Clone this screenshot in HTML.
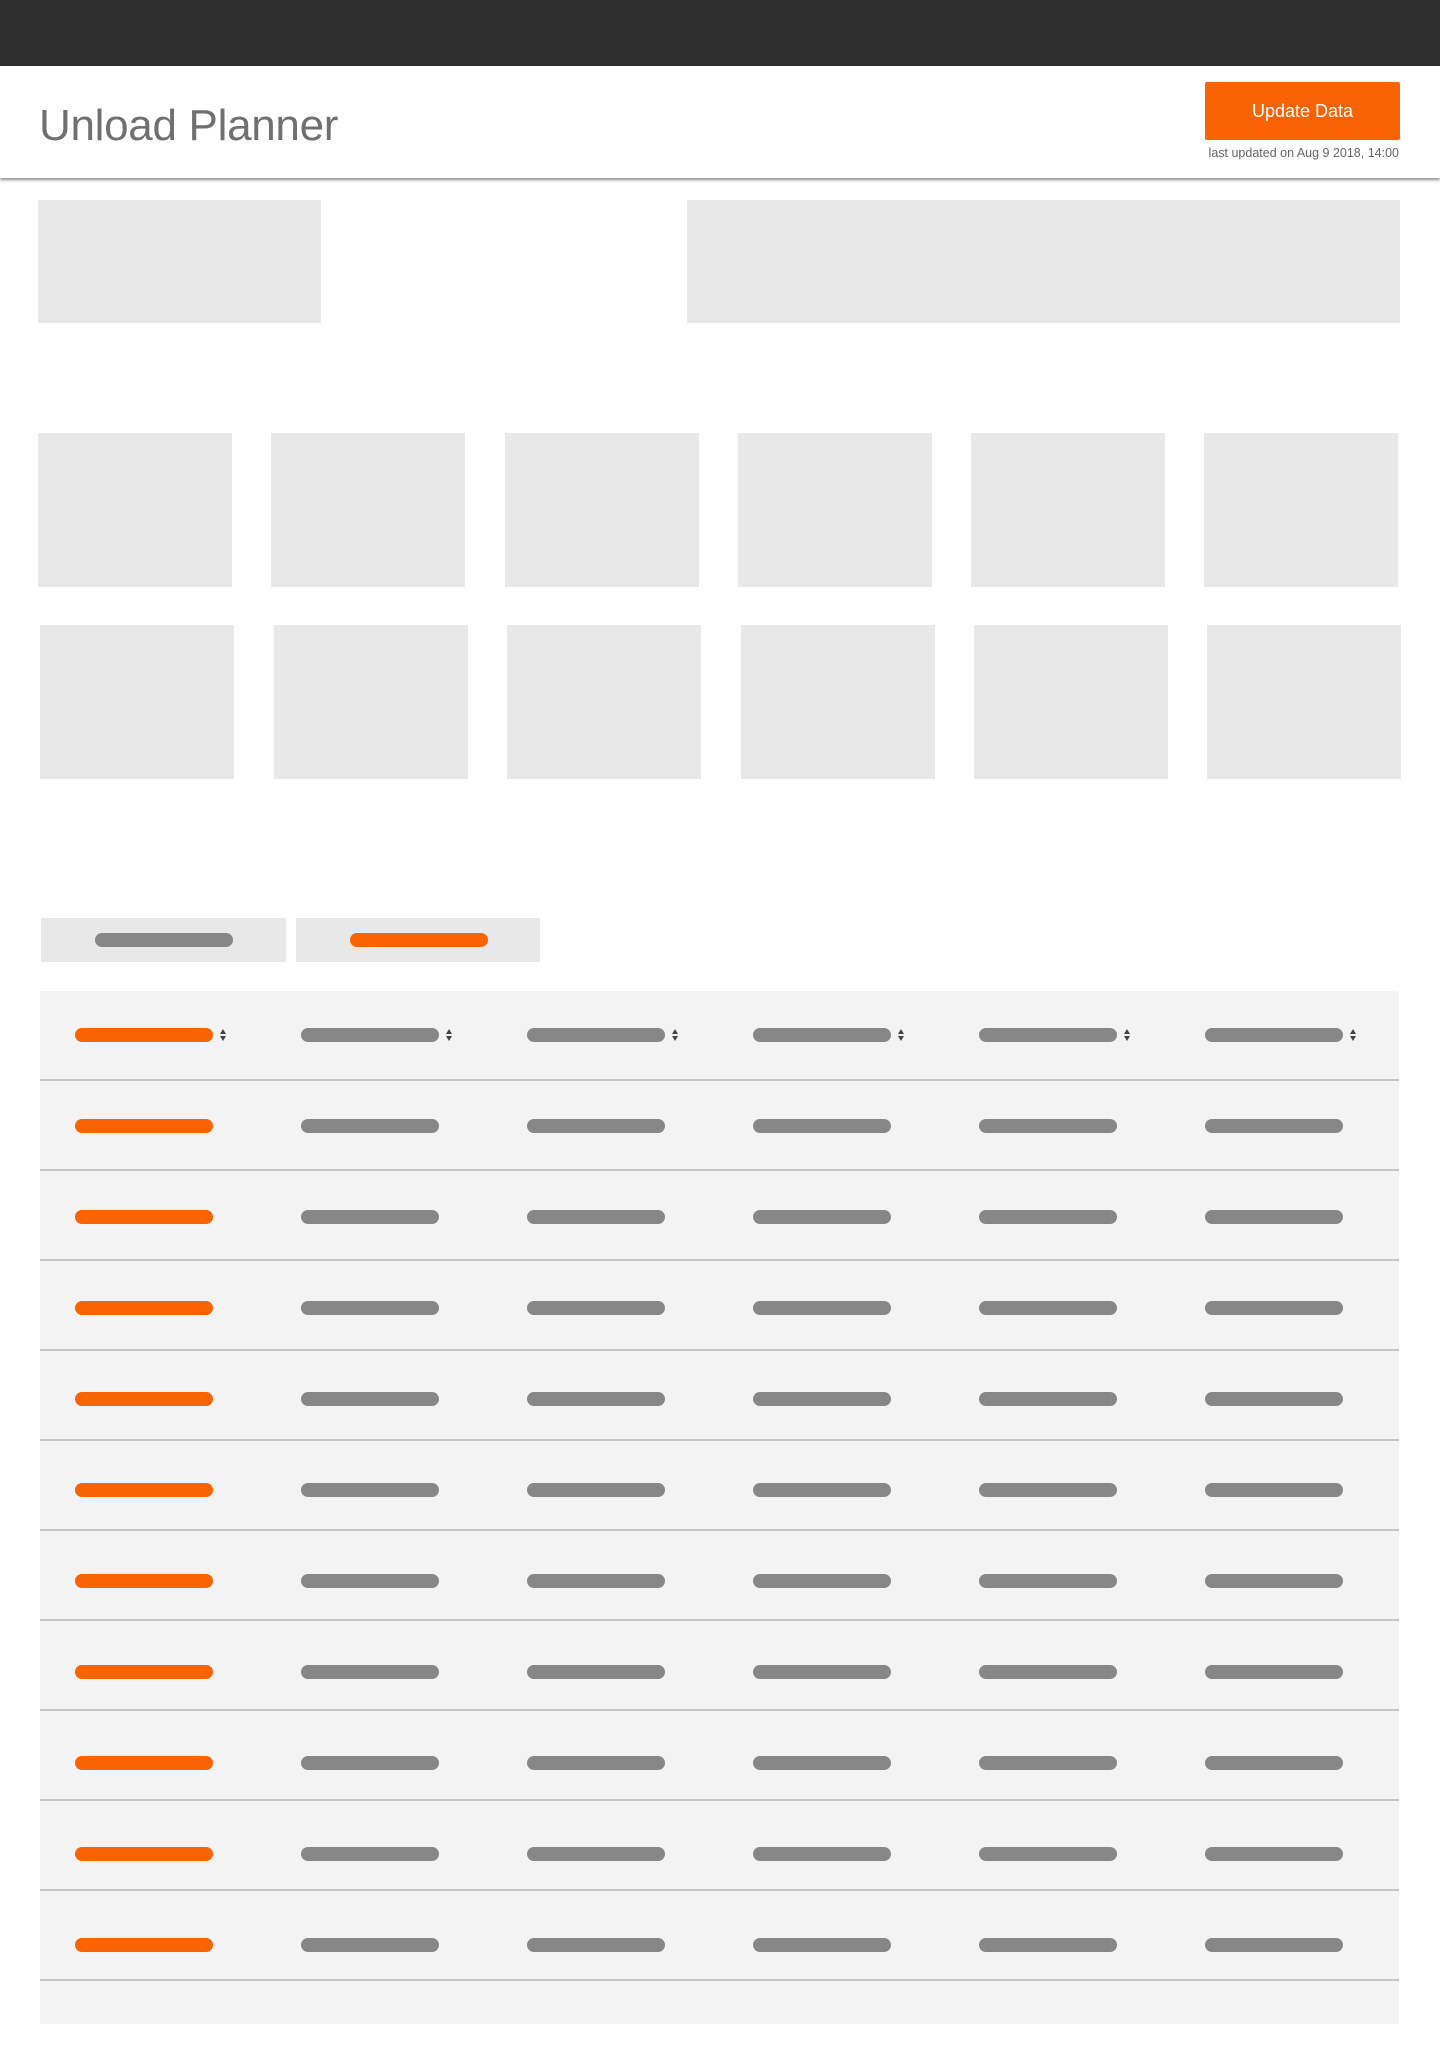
<!DOCTYPE html>
<html><head><meta charset="utf-8">
<style>
*{margin:0;padding:0;box-sizing:border-box}
body{width:1440px;height:2064px;background:#fff;position:relative;font-family:"Liberation Sans",sans-serif;overflow:hidden}
.a{position:absolute}
.top{left:0;top:0;width:1440px;height:66px;background:#2f2f2f}
.hdr{left:0;top:66px;width:1440px;height:112px;background:#fff;box-shadow:0 2px 3px rgba(0,0,0,.45)}
.title{left:39px;top:96px;font-size:44px;font-weight:300;color:#707070;letter-spacing:-0.3px;line-height:60px}
.btn{left:1205px;top:82px;width:195px;height:58px;background:#f96302;border-radius:2px;color:#fff;font-size:18px;text-align:center;line-height:58px}
.sub{left:1100px;width:299px;top:146px;text-align:right;font-size:12.5px;color:#666}
.g{background:#e8e8e8}
.tbl{left:40px;top:991px;width:1359px;height:1033px;background:#f3f3f3;border-radius:2px}
.row{position:absolute;left:0;width:1359px;height:90px;border-bottom:2px solid #c4c4c4}
.p{position:absolute;top:37px;width:138px;height:14px;border-radius:7px;background:#878787}
.o{background:#f96302}
.ar{position:absolute;top:36px;width:8px;height:16px}
.r1 .p{top:38px}.r2 .p{top:39px}.r3 .p{top:40px}.r4 .p{top:41px}.r5 .p{top:42px}
.r6 .p{top:43px}.r7 .p{top:44px}.r8 .p{top:45px}.r9 .p{top:46px}.r10 .p{top:47px}
</style></head><body>
<div class="a top"></div>
<div class="a hdr"></div>
<div class="a title">Unload Planner</div>
<div class="a btn">Update Data</div>
<div class="a sub">last updated on Aug 9 2018, 14:00</div>

<div class="a g" style="left:38px;top:200px;width:283px;height:123px"></div>
<div class="a g" style="left:687px;top:200px;width:713px;height:123px"></div>

<div class="a g" style="left:38px;top:433px;width:194px;height:154px"></div>
<div class="a g" style="left:271px;top:433px;width:194px;height:154px"></div>
<div class="a g" style="left:505px;top:433px;width:194px;height:154px"></div>
<div class="a g" style="left:738px;top:433px;width:194px;height:154px"></div>
<div class="a g" style="left:971px;top:433px;width:194px;height:154px"></div>
<div class="a g" style="left:1204px;top:433px;width:194px;height:154px"></div>

<div class="a g" style="left:40px;top:625px;width:194px;height:154px"></div>
<div class="a g" style="left:274px;top:625px;width:194px;height:154px"></div>
<div class="a g" style="left:507px;top:625px;width:194px;height:154px"></div>
<div class="a g" style="left:741px;top:625px;width:194px;height:154px"></div>
<div class="a g" style="left:974px;top:625px;width:194px;height:154px"></div>
<div class="a g" style="left:1207px;top:625px;width:194px;height:154px"></div>

<div class="a g" style="left:41px;top:918px;width:245px;height:44px"><div class="p" style="left:54px;top:15px"></div></div>
<div class="a g" style="left:296px;top:918px;width:244px;height:44px"><div class="p o" style="left:54px;top:15px"></div></div>

<div class="a tbl">
<div class="row" style="top:0">
<div class="p o" style="left:35px"></div><svg class="ar" style="left:179px" viewBox="0 0 8 16"><path d="M4 2L7 7H1Z M4 14L7 9H1Z" fill="#444"/></svg>
<div class="p" style="left:261px"></div><svg class="ar" style="left:405px" viewBox="0 0 8 16"><path d="M4 2L7 7H1Z M4 14L7 9H1Z" fill="#444"/></svg>
<div class="p" style="left:487px"></div><svg class="ar" style="left:631px" viewBox="0 0 8 16"><path d="M4 2L7 7H1Z M4 14L7 9H1Z" fill="#444"/></svg>
<div class="p" style="left:713px"></div><svg class="ar" style="left:857px" viewBox="0 0 8 16"><path d="M4 2L7 7H1Z M4 14L7 9H1Z" fill="#444"/></svg>
<div class="p" style="left:939px"></div><svg class="ar" style="left:1083px" viewBox="0 0 8 16"><path d="M4 2L7 7H1Z M4 14L7 9H1Z" fill="#444"/></svg>
<div class="p" style="left:1165px"></div><svg class="ar" style="left:1309px" viewBox="0 0 8 16"><path d="M4 2L7 7H1Z M4 14L7 9H1Z" fill="#444"/></svg>
</div>
<div class="row r1" style="top:90px"><div class="p o" style="left:35px"></div><div class="p" style="left:261px"></div><div class="p" style="left:487px"></div><div class="p" style="left:713px"></div><div class="p" style="left:939px"></div><div class="p" style="left:1165px"></div></div>
<div class="row r2" style="top:180px"><div class="p o" style="left:35px"></div><div class="p" style="left:261px"></div><div class="p" style="left:487px"></div><div class="p" style="left:713px"></div><div class="p" style="left:939px"></div><div class="p" style="left:1165px"></div></div>
<div class="row r3" style="top:270px"><div class="p o" style="left:35px"></div><div class="p" style="left:261px"></div><div class="p" style="left:487px"></div><div class="p" style="left:713px"></div><div class="p" style="left:939px"></div><div class="p" style="left:1165px"></div></div>
<div class="row r4" style="top:360px"><div class="p o" style="left:35px"></div><div class="p" style="left:261px"></div><div class="p" style="left:487px"></div><div class="p" style="left:713px"></div><div class="p" style="left:939px"></div><div class="p" style="left:1165px"></div></div>
<div class="row r5" style="top:450px"><div class="p o" style="left:35px"></div><div class="p" style="left:261px"></div><div class="p" style="left:487px"></div><div class="p" style="left:713px"></div><div class="p" style="left:939px"></div><div class="p" style="left:1165px"></div></div>
<div class="row r6" style="top:540px"><div class="p o" style="left:35px"></div><div class="p" style="left:261px"></div><div class="p" style="left:487px"></div><div class="p" style="left:713px"></div><div class="p" style="left:939px"></div><div class="p" style="left:1165px"></div></div>
<div class="row r7" style="top:630px"><div class="p o" style="left:35px"></div><div class="p" style="left:261px"></div><div class="p" style="left:487px"></div><div class="p" style="left:713px"></div><div class="p" style="left:939px"></div><div class="p" style="left:1165px"></div></div>
<div class="row r8" style="top:720px"><div class="p o" style="left:35px"></div><div class="p" style="left:261px"></div><div class="p" style="left:487px"></div><div class="p" style="left:713px"></div><div class="p" style="left:939px"></div><div class="p" style="left:1165px"></div></div>
<div class="row r9" style="top:810px"><div class="p o" style="left:35px"></div><div class="p" style="left:261px"></div><div class="p" style="left:487px"></div><div class="p" style="left:713px"></div><div class="p" style="left:939px"></div><div class="p" style="left:1165px"></div></div>
<div class="row r10" style="top:900px"><div class="p o" style="left:35px"></div><div class="p" style="left:261px"></div><div class="p" style="left:487px"></div><div class="p" style="left:713px"></div><div class="p" style="left:939px"></div><div class="p" style="left:1165px"></div></div>
</div>
</body></html>
